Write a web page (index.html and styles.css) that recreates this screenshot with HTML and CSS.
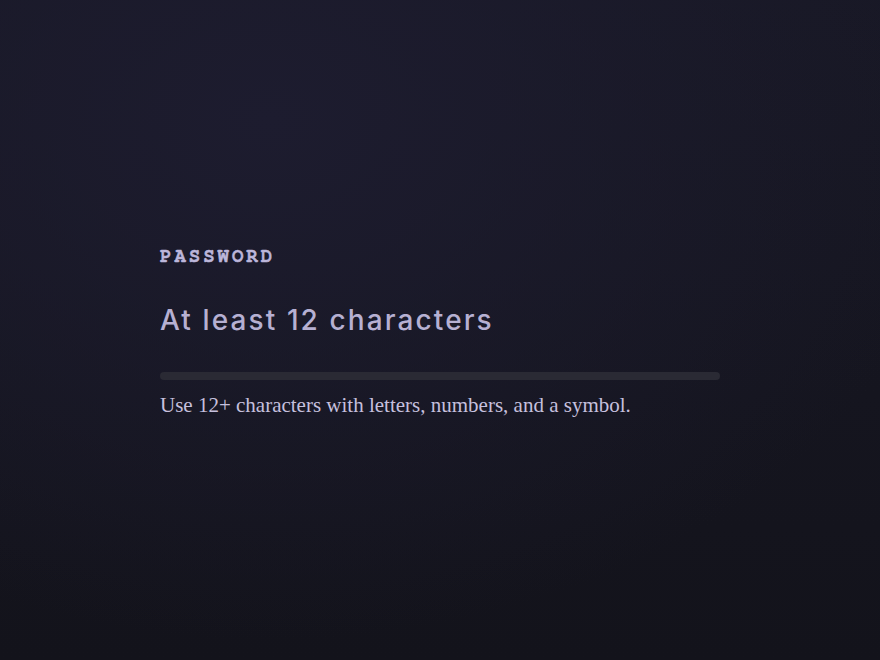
FILE: index.html
```
<!DOCTYPE html>
<html>
<head>
<meta charset="utf-8">
<link rel="stylesheet" href="styles.css">
</head>
<body>
<main class="page">
  <section class="field">
    <div class="label">PASSWORD</div>
    <div class="value">At least 12 characters</div>
    <div class="meter"><div class="meter-fill"></div></div>
    <p class="hint">Use 12+ characters with letters, numbers, and a symbol.</p>
  </section>
</main>
</body>
</html>
```
FILE: styles.css
```
html, body {
  margin: 0;
  padding: 0;
  height: 100%;
}
body {
  background: radial-gradient(ellipse 700px 520px at 270px 120px, #1d1c2f 0%, #18182600 100%), linear-gradient(180deg, #181825 0%, #13131b 100%);
  background-color: #15151e;
}
.page {
  box-sizing: border-box;
  height: 660px;
  padding-top: 247px;
  display: flex;
  justify-content: center;
}
.field {
  width: 560px;
  display: flex;
  flex-direction: column;
}
.label {
  font-family: FreeMono, "Liberation Mono", monospace;
  font-weight: bold;
  font-size: 19px;
  letter-spacing: 3px;
  color: #bcb6da;
  line-height: 20px;
  -webkit-text-stroke: 0.5px #bcb6da;
}
.value {
  margin-top: 36px;
  font-family: Inter, sans-serif;
  font-weight: 500;
  font-size: 28px;
  letter-spacing: 2.1px;
  color: #b6b0d2;
  line-height: 34px;
}
.meter {
  margin-top: 35px;
  height: 8px;
  border-radius: 4px;
  background: #2a2a34;
}
.meter-fill {
  width: 0;
  height: 100%;
}
.hint {
  margin: 13px 0 0;
  font-family: "Liberation Serif", serif;
  font-size: 21px;
  line-height: 24px;
  color: #c6c0de;
}
```
